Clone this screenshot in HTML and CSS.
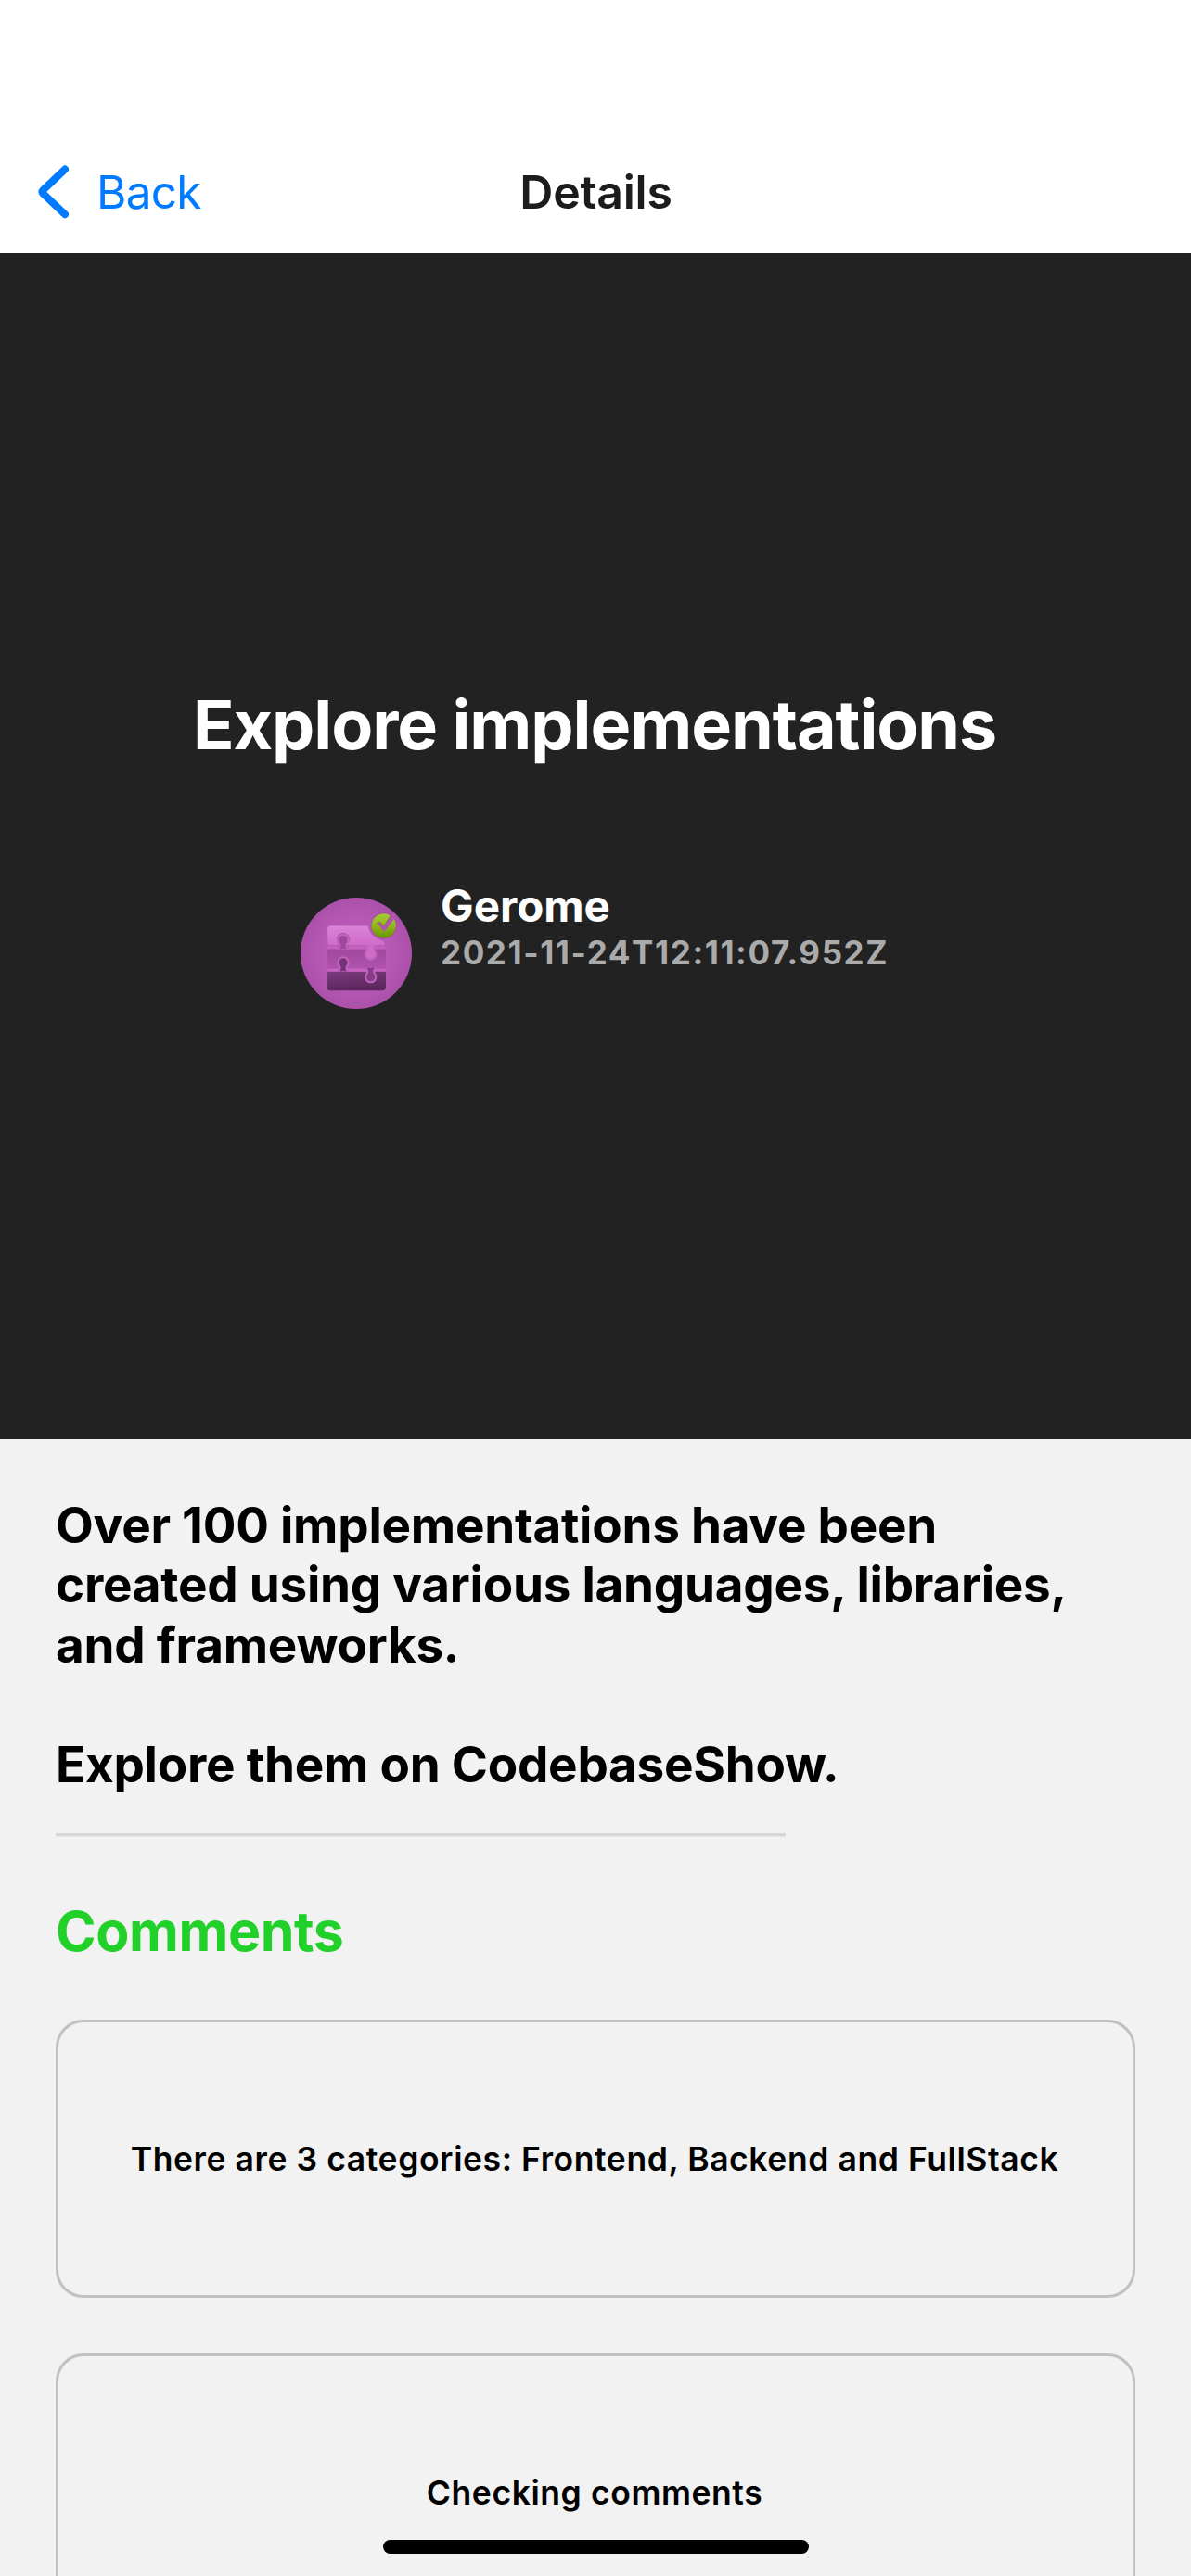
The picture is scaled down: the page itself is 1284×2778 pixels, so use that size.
FILE: index.html
```html
<!DOCTYPE html>
<html lang="en">
<head>
<meta charset="utf-8">
<title>Details</title>
<link rel="stylesheet" href="styles.css">
</head>
<body>
<div class="screen">
  <header class="nav">
    <a class="back">
      <svg class="chevron" viewBox="0 0 34 58"><path d="M30 4.6 L6.3 27.2 Q4.8 28.9 6.3 30.6 L30 53.2" fill="none" stroke="#007aff" stroke-width="8" stroke-linecap="round" stroke-linejoin="round"/></svg>
      <span class="back-label">Back</span>
    </a>
    <h1 class="nav-title">Details</h1>
  </header>

  <section class="hero">
    <h2 class="hero-title">Explore implementations</h2>
    <div class="author">
      <svg class="avatar" viewBox="42 54 360 360">
        <defs>
          <radialGradient id="bg"><stop offset="0" stop-color="#c565bf"/><stop offset=".55" stop-color="#b959b6"/><stop offset="1" stop-color="#ab51aa"/></radialGradient>
          <linearGradient id="top" x2="0" y2="1"><stop offset="0" stop-color="#d985d7"/><stop offset="1" stop-color="#d06aca"/></linearGradient>
          <linearGradient id="mid" x2="0" y2="1"><stop offset="0" stop-color="#9f499e"/><stop offset="1" stop-color="#af52ad"/></linearGradient>
          <linearGradient id="low" x1="0" x2=".3" y2="1"><stop offset="0" stop-color="#7b397c"/><stop offset="1" stop-color="#5c285f"/></linearGradient>
          <linearGradient id="tick" x2="0" y2="1"><stop offset="0" stop-color="#a6cb35"/><stop offset=".5" stop-color="#91b919"/><stop offset="1" stop-color="#699100"/></linearGradient>
        </defs>
        <circle cx="222" cy="234" r="180" fill="url(#bg)"/>
        <path d="M127 221 H318 V272 Q318 283 307 283 H138 Q127 283 127 272 Z" fill="url(#mid)"/>
        <path d="M127 294 H318 V343 Q318 355 307 355 H138 Q127 355 127 343 Z" fill="url(#low)"/>
        <path d="M138 144 H261 Q264 182 315 195 V203 Q315 209 309 209 H138 Q128 209 128 199 V154 Q128 144 138 144Z" fill="url(#top)" stroke="#ad50aa" stroke-width="1.5"/>
        <path d="M163 214 Q170 208 166 202 A19 19 0 1 1 194 202 Q190 208 197 214" fill="none" stroke="#a54ca4" stroke-width="4"/>
        <g stroke="#c463c0" stroke-width="6" stroke-linejoin="round">
          <path d="M163 219 Q173 211 168 203 A17 17 0 1 1 192 203 Q187 211 197 219" fill="#9c489b"/>
          <path d="M252 208 Q262 216 257 225 A17 17 0 1 0 281 225 Q276 216 286 208" fill="#d06dca"/>
          <path d="M163 292 Q173 284 168 276 A17 17 0 1 1 192 276 Q187 284 197 292" fill="#743577"/>
          <path d="M252 282 Q262 290 257 299 A17 17 0 1 0 281 299 Q276 290 286 282" fill="#853d87"/>
          <path d="M127 215 H163 M197 215 H252 M286 215 H318 M127 288 H163 M197 288 H252 M286 288 H318"/>
        </g>
        <circle cx="311" cy="145" r="42" fill="#9a4699" opacity=".6"/>
        <circle cx="311" cy="145" r="39.5" fill="url(#tick)"/>
        <path d="M334 109 L311 147 L303 136 Q300 132 288 136 Q298 144 306 157 Q312 168 320 156 L345 122 L352 119 L343 105Z" fill="#b154ac"/>
        <path d="M288 136 Q299 131 303 136 L311 147 L334 111" fill="none" stroke="#5b7b07" stroke-width="1.5"/>
      </svg>
      <div class="author-text">
        <span class="author-name">Gerome</span>
        <time class="date">2021-11-24T12:11:07.952Z</time>
      </div>
    </div>
  </section>

  <main class="content">
    <p class="article">Over 100 implementations have been<br>created using various languages, libraries,<br>and frameworks.<br><br>Explore them on CodebaseShow.</p>
    <hr class="divider">
    <h3 class="comments-title">Comments</h3>
    <div class="comments">
      <div class="comment">There are 3 categories: Frontend, Backend and FullStack</div>
      <div class="comment">Checking comments</div>
    </div>
  </main>
  <div class="home-indicator"></div>
</div>
</body>
</html>
```
FILE: styles.css
```css
* { box-sizing: border-box; margin: 0; padding: 0; }
body { font-family: Inter, "Liberation Sans", sans-serif; color: #000; background: #f2f2f2; }
.screen { position: relative; width: 1284px; height: 2778px; overflow: hidden; }
.nav { display: grid; grid-template-columns: 1fr auto 1fr; align-items: center; height: 273px; padding: 141px 39px 0 40px; background: #fff; }
.back { display: flex; align-items: center; gap: 30px; color: #007aff; font-size: 49.5px; letter-spacing: -0.7px; }
.chevron { width: 34px; height: 58px; }
.nav-title { font-size: 50px; font-weight: 600; letter-spacing: -0.2px; color: #1c1c1e; }
.hero { height: 1279px; padding-top: 464px; background: #222; color: #fff; }
.hero-title { padding-right: 2px; text-align: center; font-size: 73.5px; line-height: 90px; font-weight: 700; letter-spacing: -1.05px; }
.author { display: flex; gap: 31px; margin: 120px 0 0 324px; }
.avatar { width: 120px; height: 120px; margin-top: 21px; }
.author-text { display: flex; flex-direction: column; }
.author-name { font-size: 47.5px; line-height: 59px; font-weight: 700; letter-spacing: 0; }
.date { font-size: 35px; line-height: 43px; font-weight: 700; letter-spacing: 1.6px; color: #aaa; }
.content { padding: 61px 60px 0; }
.article { font-size: 53px; line-height: 64.4px; font-weight: 700; letter-spacing: -0.25px; white-space: nowrap; }
.divider { width: 787px; height: 4px; margin-top: 42px; border: 0; border-bottom: 1px solid #e7e7e7; background: #d7d7d7; }
.comments-title { margin-top: 66px; font-size: 59px; line-height: 72px; font-weight: 700; letter-spacing: -0.4px; color: #22d02a; }
.comments { display: flex; flex-direction: column; gap: 60px; margin-top: 59px; }
.comment { display: flex; align-items: center; justify-content: center; height: 300px; padding-right: 2px; border: 3px solid #c4c0c1; border-radius: 30px; font-size: 35.5px; font-weight: 600; letter-spacing: 0.58px; white-space: nowrap; }
.home-indicator { position: absolute; left: 413px; bottom: 24px; width: 459px; height: 15px; border-radius: 8px; background: #000; }
```
